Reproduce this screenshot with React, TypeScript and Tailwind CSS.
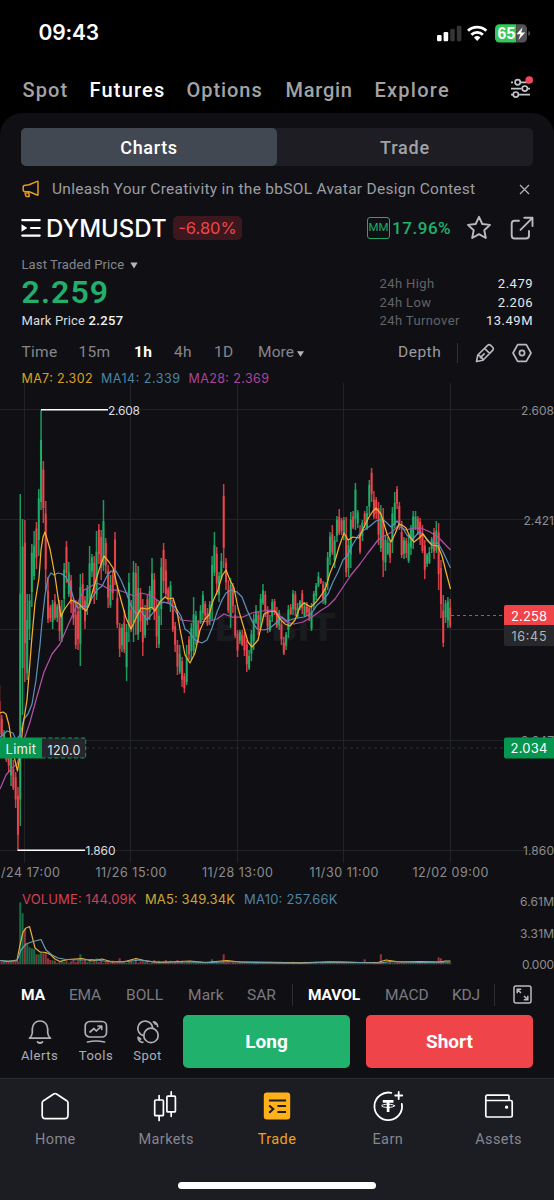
import React from "react";

type Candle = [number, number, "g" | "r"];

const STEP = 2.3115;
const LAST_X = 450.2;

// Oldest to newest: high y, low y, direction
const CANDLES: Candle[] = [
  [685, 738, "r"], [715, 742, "r"], [730, 750, "g"], [738, 762, "r"], [745, 772, "r"], [742, 786, "g"], [760, 790, "r"], [772, 808, "r"],
  [787, 850, "r"], [494, 826, "g"], [519, 715, "g"], [520, 682, "r"], [594, 680, "g"], [594, 640, "g"], [544, 607, "g"], [531, 580, "g"],
  [522, 569, "r"], [489, 556, "g"], [410, 510, "g"], [461, 523, "r"], [501, 591, "r"], [577, 623, "r"], [605, 622, "r"], [600, 629, "g"],
  [594, 620, "r"], [604, 622, "g"], [600, 641, "r"], [600, 642, "g"], [563, 610, "g"], [541, 583, "r"], [562, 597, "g"], [575, 613, "r"],
  [598, 625, "r"], [600, 649, "r"], [605, 650, "r"], [574, 666, "g"], [573, 610, "r"], [596, 629, "r"], [585, 615, "g"], [546, 604, "g"],
  [554, 577, "g"], [556, 604, "r"], [531, 600, "g"], [524, 564, "r"], [530, 580, "r"], [500, 571, "g"], [538, 574, "r"], [565, 608, "r"],
  [575, 608, "g"], [571, 600, "r"], [532, 585, "r"], [585, 628, "r"], [623, 657, "r"], [624, 652, "g"], [610, 653, "r"], [624, 681, "g"],
  [573, 642, "g"], [600, 632, "r"], [561, 642, "g"], [563, 635, "r"], [566, 640, "g"], [588, 632, "r"], [599, 656, "r"], [605, 638, "g"],
  [595, 625, "r"], [586, 620, "g"], [558, 610, "g"], [573, 620, "r"], [600, 648, "r"], [602, 648, "g"], [558, 625, "g"], [543, 593, "r"],
  [559, 597, "r"], [587, 602, "r"], [581, 612, "g"], [600, 632, "r"], [622, 652, "r"], [640, 675, "r"], [645, 674, "g"], [657, 687, "r"],
  [673, 693, "r"], [645, 685, "g"], [636, 660, "r"], [623, 660, "g"], [597, 655, "g"], [611, 645, "g"], [620, 643, "r"], [605, 624, "g"],
  [591, 620, "g"], [601, 620, "r"], [608, 626, "r"], [601, 625, "g"], [556, 620, "g"], [532, 576, "g"], [547, 595, "r"], [572, 602, "g"],
  [553, 580, "g"], [484, 568, "r"], [558, 590, "r"], [580, 613, "r"], [578, 628, "g"], [583, 613, "r"], [605, 638, "r"], [630, 657, "r"],
  [630, 644, "g"], [630, 646, "r"], [632, 656, "r"], [640, 672, "r"], [650, 670, "g"], [630, 661, "g"], [614, 650, "g"], [605, 624, "g"],
  [612, 635, "r"], [594, 628, "g"], [584, 605, "g"], [591, 617, "r"], [606, 633, "r"], [615, 632, "g"], [599, 622, "g"], [599, 615, "r"],
  [607, 628, "r"], [610, 630, "g"], [621, 645, "r"], [637, 655, "r"], [632, 650, "g"], [605, 638, "g"], [604, 615, "r"], [590, 615, "g"],
  [591, 616, "r"], [603, 618, "g"], [600, 610, "g"], [590, 614, "r"], [602, 617, "g"], [602, 616, "r"], [606, 621, "r"], [603, 631, "g"],
  [591, 610, "g"], [583, 600, "g"], [572, 587, "g"], [578, 584, "r"], [581, 604, "r"], [582, 605, "g"], [552, 590, "g"], [532, 565, "g"],
  [525, 555, "r"], [536, 568, "g"], [516, 542, "g"], [509, 535, "r"], [518, 535, "r"], [517, 540, "g"], [517, 577, "r"], [540, 577, "g"],
  [512, 568, "g"], [511, 529, "r"], [483, 530, "g"], [510, 528, "g"], [525, 554, "r"], [520, 541, "g"], [511, 528, "r"], [506, 530, "g"],
  [480, 515, "g"], [468, 502, "r"], [491, 519, "r"], [497, 519, "r"], [502, 545, "r"], [505, 552, "g"], [508, 577, "r"], [535, 571, "g"],
  [537, 555, "g"], [540, 563, "r"], [507, 553, "g"], [492, 528, "g"], [486, 509, "r"], [502, 530, "r"], [521, 558, "r"], [537, 559, "g"],
  [538, 558, "r"], [535, 563, "g"], [525, 555, "g"], [511, 549, "g"], [511, 530, "g"], [516, 535, "r"], [518, 545, "r"], [525, 553, "r"],
  [540, 579, "r"], [553, 567, "g"], [547, 564, "g"], [537, 553, "g"], [528, 559, "r"], [521, 553, "g"], [523, 590, "r"], [560, 618, "r"],
  [595, 647, "r"], [600, 623, "g"], [597, 628, "g"], [599, 628, "r"],
];

const MA7 =
  "0,713 3,712 6,714 9,725 13,752 17.5,771 20,755 23,725 27,700 31.7,640 35,603 39,578 41,550 43,537 45,532 50,549 55,576 58,597 61,617 64,610 71,600 78,603 86,611 89,605 93,590 99,570 104,556 109,562 113,568 117,585 121,600 126,618 131,629 136,618 141,608 147,609 152,607 155,611 160,602 165,597 168,599 173,598 177,611 180,629 185,655 190,663 195,653 200,630 205,619 209,615 213,601 218,590 222,576 226,570 230,580 234,588 238,608 243,625 248,642 252,647 258,640 264,614 268,612 275,611 280,619 285,624 290,626 295,620 300,607 304,603 311,607 316,602 322,594 326,587 330,573 335,561 339,547 344,533 348,540 353,537 359,538 363,529 369,517 373,511 376,508 381,514 384,524 387,534 391,542 395,534 399,524 402,525 406,528 410,537 414,542 419,538 423,534 427,540 432,545 438,546 442,556 446,572 450.5,589";
const MA14 =
  "0,737 4,734 7,731 13,733 16,740 20,735 24,719 28,714 32,704 36,680 40,645 42,622 45,595 48,578 51,573 54,575 58,573 62,574 66,577 70,586 74,600 78,608 84,606 88,607 92,598 97,590 102,586 107,576 111,571 116,571 121,580 126,592 131,606 136,614 141,611 147,620 152,614 158,605 164,602 170,604 176,608 181,616 185,629 189,632 195,640 202,643 207,640 212,628 217,612 222,600 226,593 231,590 237,592 242,597 247,610 252,621 257,629 264,630 270,628 276,623 282,617 287,621 293,619 298,618 304,617 311,614 317,605 322,601 328,594 333,582 338,572 343,560 347,556 353,544 358,536 364,530 370,526 376,521 382,519 386,522 391,527 397,521 402,527 407,535 412,540 419,532 423,534 430,543 438,543 443,552 450.5,568";
const MA28 =
  "0,789 6,775 12,768 17,764 24,740 30,722 36,700 44,672 52,654 60,644 66,630 73,614 78,602 84,590 90,587 96,583 102,585 110,590 118,590 127,593 134,596 141,593 150,595 160,602 170,603 176,612 181,620 190,621 200,622 210,621 217,619 224,614 232,617 243,617 252,613 262,611 272,610 278,614 286,622 294,624 303,622 312,617 320,611 328,606 335,599 343,587 351,575 360,564 368,553 378,540 384,536 392,532 398,526 406,530 413,528 421,528 430,532 438,537 450.5,550";

const BIG_VOLUME: Record<number, number> = {
  9: 62, 10: 51, 11: 36, 12: 21, 13: 17, 14: 16, 15: 15, 16: 10, 17: 10, 18: 13, 19: 11, 20: 12, 21: 6, 23: 4,
  35: 10, 42: 6, 52: 6, 59: 6, 92: 5, 97: 10, 158: 5, 174: 3, 165: 10, 190: 7, 191: 6,
};

const Label = ({ x, y, w, size = 12.5, fill = "#8b8c91", children }: {
  x: number; y: number; w: number; size?: number; fill?: string; children: string;
}) => (
  <text x={x} y={y} textLength={w} lengthAdjust="spacing" fontSize={size} fill={fill} fontFamily="Inter, sans-serif">
    {children}
  </text>
);

function Chart() {
  const n = CANDLES.length;
  return (
    <svg width="554" height="608" viewBox="0 372 554 608" className="block shrink-0">
      <g stroke="#222327" strokeWidth="1">
        {[24.5, 130.5, 237.5, 343.5, 450.5].map((x) => <line key={x} x1={x} x2={x} y1="383" y2="863" />)}
        {[409.5, 519.5, 629.5, 740.5, 850.5].map((y) => <line key={y} x1="0" x2="554" y1={y} y2={y} />)}
      </g>
      <text x="215" y="641" textLength="121" fontSize="38" fontWeight="800" fill="#1a1b1e" fontFamily="Inter, sans-serif">BYBIT</text>
      <line x1="86" x2="504" y1="748" y2="748" stroke="#26302d" strokeDasharray="3 3" />
      {CANDLES.map(([h, l, c], i) => {
        const x = LAST_X - (n - 1 - i) * STEP;
        const color = c === "g" ? "#20b06b" : "#ee454d";
        const size = l - h;
        const top = h + size * (i % 3 === 0 ? 0.3 : 0.14);
        return (
          <g key={i} fill={color}>
            <rect x={x - 0.75} y={h} width="1.5" height={size} opacity="0.85" />
            <rect x={x - 1} y={top} width="2" height={size * 0.62} opacity="0.9" />
          </g>
        );
      })}
      <g fill="none" strokeWidth="1.25" strokeLinejoin="round">
        <polyline points={MA28} stroke="#b24fa6" />
        <polyline points={MA14} stroke="#5b8fb9" />
        <polyline points={MA7} stroke="#f2b02c" />
      </g>
      <path d="M41 409.8H108M17.5 850.3H85" stroke="#fff" strokeWidth="1.4" />
      <Label x={108} y={414.5} w={32} size={12} fill="#dcdde0">2.608</Label>
      <Label x={85.5} y={855} w={30} size={12} fill="#dcdde0">1.860</Label>

      <Label x={21.5} y={383} w={71} fill="#d9a020">MA7: 2.302</Label>
      <Label x={101} y={383} w={79} fill="#4d83a3">MA14: 2.339</Label>
      <Label x={188.5} y={383} w={80.5} fill="#a8459b">MA28: 2.369</Label>

      <Label x={521} y={414.5} w={33} size={12}>2.608</Label>
      <Label x={523.5} y={524.5} w={30.5} size={12}>2.421</Label>
      <Label x={521} y={745} w={33} size={12}>2.047</Label>
      <Label x={523} y={855} w={31} size={12}>1.860</Label>
      <line x1="451" x2="504" y1="615.5" y2="615.5" stroke="#6d6e73" strokeDasharray="3 3" />
      <path d="M506 605H554V625H504V607a2 2 0 0 1 2-2Z" fill="#f0444b" />
      <path d="M504 625H554V646H506a2 2 0 0 1-2-2Z" fill="#26282c" />
      <Label x={511} y={620.5} w={36} size={13} fill="#ffffff">2.258</Label>
      <Label x={511.5} y={640.5} w={35} size={12.5} fill="#b3b4b8">16:45</Label>
      <rect x="504" y="737.5" width="52" height="21" rx="2" fill="#05964f" />
      <Label x={510.5} y={753} w={37} size={13} fill="#ffffff">2.034</Label>

      <rect x="42" y="738" width="44" height="20" fill="#26272c" />
      <path d="M42 738H85.7V758H42" fill="none" stroke="#0c9a58" strokeDasharray="4 2.5" />
      <rect x="0" y="737.5" width="42" height="21" fill="#05964f" />
      <Label x={5.5} y={753.5} w={30.5} size={13} fill="#f2f3f4">Limit</Label>
      <Label x={47.5} y={754.5} w={33} size={12.5} fill="#e4e5e7">120.0</Label>

      <Label x={1} y={877} w={59}>/24 17:00</Label>
      <Label x={95.5} y={877} w={71}>11/26 15:00</Label>
      <Label x={202} y={877} w={71}>11/28 13:00</Label>
      <Label x={309.5} y={877} w={69}>11/30 11:00</Label>
      <Label x={412.5} y={877} w={76}>12/02 09:00</Label>

      {CANDLES.map(([, , c], i) => {
        const h = BIG_VOLUME[i] ?? (i < 9 ? 3 : 1.5 + ((i * 7) % 5) * (i < 80 ? 0.7 : 0.25));
        const red = c === "r" || i === 165;
        return <rect key={i} x={LAST_X - (n - 1 - i) * STEP - 1} y={964.3 - h} width="2" height={h} fill={red ? "#96323a" : "#176b45"} />;
      })}
      <g fill="none" strokeWidth="1.2" strokeLinejoin="round">
        <polyline stroke="#e0b040" points="0,960.5 8,961.5 17,960 20,945 23,932 26,928 29.5,926.5 32,936 35,948 40,952 46,952.5 51,955 55,959 60,961.5 68,959.5 82,958.5 92,961 102,959 112,962 125,961.5 136,958.5 146,961 160,962.5 190,961 205,962.5 227,960.5 240,962 300,962.8 330,961.8 360,962.5 378,962.5 386,960 400,962 420,961.5 440,962 445,961 450.5,961" />
        <polyline stroke="#6d9db0" points="0,960.5 8,961 17,961 21,950 26,944 33,941.5 41,939.5 46,950 52,955 58,958 66,959.5 82,960 92,959.5 104,961 122,962 140,960 156,962 190,962 210,962.5 232,961.5 250,962.5 300,963 340,962 380,963 390,961.5 420,962.3 450.5,962" />
      </g>
      <Label x={22} y={904} w={114.5} size={13} fill="#d43f55">VOLUME: 144.09K</Label>
      <Label x={145} y={904} w={90} size={13} fill="#cda736">MA5: 349.34K</Label>
      <Label x={244} y={904} w={93.5} size={13} fill="#4d83a3">MA10: 257.66K</Label>
      <Label x={520} y={906} w={34} size={12}>6.61M</Label>
      <Label x={520} y={937.5} w={34} size={12}>3.31M</Label>
      <Label x={522} y={969} w={32} size={12}>0.000</Label>
    </svg>
  );
}

const StatusBar = () => (
  <div className="flex h-[66px] shrink-0 items-center justify-between pl-[38.5px] pr-[22px] text-white">
    <span className="font-[Inter] text-[21px] font-semibold tracking-[-0.2px]">09:43</span>
    <svg width="96" height="22" viewBox="0 0 96 22">
      <rect x="1" y="13" width="4.6" height="6.3" rx="1.2" fill="#fff" />
      <rect x="7.6" y="10" width="4.6" height="9.3" rx="1.2" fill="#fff" />
      <rect x="14.2" y="7" width="4.6" height="12.3" rx="1.2" fill="#353538" />
      <rect x="20.8" y="3.8" width="4.6" height="15.5" rx="1.2" fill="#353538" />
      <g fill="none" stroke="#fff" strokeWidth="2.9">
        <path d="M32 8.8a13.2 13.2 0 0 1 18.3 0" />
        <path d="M35.4 12.7a8.3 8.3 0 0 1 11.5 0" />
      </g>
      <path d="M38 15.5a4.6 4.6 0 0 1 6.3 0L41.2 19Z" fill="#fff" />
      <clipPath id="battery"><rect x="59" y="2.2" width="32" height="18.3" rx="4.5" /></clipPath>
      <g clipPath="url(#battery)">
        <rect x="59" y="2" width="21.2" height="19" fill="#34c759" />
        <rect x="80.2" y="2" width="11" height="19" fill="#525255" />
      </g>
      <path d="M92.3 9v5q2-.6 2-2.5t-2-2.5" fill="#525255" />
      <text x="61.6" y="16.9" fontSize="15.8" fontWeight="700" fill="#fff" fontFamily="'Liberation Sans', sans-serif">65</text>
      <path d="M86.6 5.2 80.4 12.2H84.4L82.4 18 89.2 10.4H85.2Z" fill="#fff" />
    </svg>
  </div>
);

const TopTabs = () => (
  <div className="flex h-[47px] shrink-0 items-center pl-[22.5px] pt-[1px] text-[20px] font-medium text-[#a3a3a3]">
    <span className="w-[67px] tracking-[1.1px]">Spot</span>
    <span className="w-[97px] tracking-[1.2px] text-white">Futures</span>
    <span className="w-[99px] tracking-[0.95px]">Options</span>
    <span className="w-[89px] tracking-[0.75px]">Margin</span>
    <span className="w-[135px] tracking-[1.25px]">Explore</span>
    <svg className="mb-[6px]" width="24" height="26" viewBox="0 0 24 26" fill="none" stroke="#c3c4c8" strokeWidth="1.7">
      <path d="M1 8.3H3M10.7 8.3H19M1 14.6H11.5M18 14.6H20M1 20.6H3M9 20.6H20" />
      <circle cx="7.7" cy="8.3" r="2.6" /><circle cx="14.8" cy="14.6" r="2.6" /><circle cx="5.8" cy="20.6" r="2.6" />
      <circle cx="19.2" cy="6" r="3.8" fill="#f5455a" stroke="none" />
    </svg>
  </div>
);

const Segment = () => (
  <div className="mx-[21px] mt-[15px] flex h-[38px] shrink-0 rounded-[5px] bg-[#1d1d23] text-[18px] font-medium">
    <div className="flex flex-1 items-center justify-center rounded-[5px] bg-[#414852] tracking-[0.65px] text-white">Charts</div>
    <div className="flex flex-1 items-center justify-center tracking-[0.8px] text-[#a1a2a7]">Trade</div>
  </div>
);

const Announcement = () => (
  <div className="flex h-[46px] shrink-0 items-center pl-[22px] pr-[24px]">
    <svg width="18" height="18" viewBox="0 0 18 18" fill="none" stroke="#e79b1e" strokeWidth="1.5" strokeLinejoin="round" strokeLinecap="round">
      <path d="M1.2 6.8Q1.2 5.8 2.2 5.6L7 4.8 15.2 1.4Q16 1.2 16 2V14.5Q16 15.4 15.2 15L7.2 11.8 2.2 11.4Q1.2 11.2 1.2 10.3ZM2.8 11.6 3.7 15.6Q3.9 16.5 4.8 16.5H6.5Q7.4 16.4 7.2 15.5L6.4 11.8M4.5 11.6 5 13.4" />
    </svg>
    <span className="ml-[12px] flex-1 whitespace-nowrap pt-[2px] text-[15.5px] tracking-[0.275px] text-[#9c9da3]">Unleash Your Creativity in the bbSOL Avatar Design Contest</span>
    <svg width="11" height="11" viewBox="0 0 11 11" stroke="#b4b5b9" strokeWidth="1.2"><path d="M1 1 10 10M10 1 1 10" /></svg>
  </div>
);

const TitleRow = () => (
  <div className="flex h-[32px] shrink-0 items-center pl-[21px] pr-[20.5px]">
    <svg width="20" height="20" viewBox="0 0 20 20" fill="none" stroke="#fff" strokeWidth="2.2" strokeLinecap="round">
      <path d="M1.3 2.2H18.7M10 10H18.7M1.3 17.6H18.7" /><path d="M.5 6.2 6.3 10 .5 13.8Z" fill="#fff" stroke="none" />
    </svg>
    <span className="ml-[5px] w-[122px] whitespace-nowrap pt-[1px] font-[Inter] text-[24px] font-medium text-white">DYMUSDT</span>
    <span className="ml-[5px] flex h-[24px] w-[69px] items-center justify-center rounded-[5px] bg-[#3c181e] font-[Inter] text-[16.5px] text-[#ef454a]">-6.80%</span>
    <span className="ml-auto flex h-[22px] w-[23px] items-center justify-center rounded-[3px] border-[1.5px] border-[#1fa968] text-[11.5px] text-[#1fa968]">MM</span>
    <span className="ml-[2px] w-[59px] whitespace-nowrap pt-[1px] text-[17px] font-medium tracking-[0.55px] text-[#22b06c]">17.96%</span>
    <svg className="ml-[15px]" width="26" height="26" viewBox="0 0 26 26" fill="none" stroke="#b9bac0" strokeWidth="1.9" strokeLinejoin="round">
      <path d="M13 1.8 16.3 9 24 9.9 18.3 15.2 19.8 23 13 19.1 6.2 23 7.7 15.2 2 9.9 9.7 9Z" />
    </svg>
    <svg className="ml-[17.5px]" width="24" height="24" viewBox="0 0 24 24" fill="none" stroke="#b9bac0" strokeWidth="1.9" strokeLinecap="round" strokeLinejoin="round">
      <path d="M9 4.8H4.5Q1.7 4.8 1.7 7.6V19.5Q1.7 22.5 4.5 22.5H16Q19 22.5 19 19.5V15M14.3 1.8H22.5V10M22.2 2.2 10.5 13.8" />
    </svg>
  </div>
);

const Stat = ({ label, value }: { label: string; value: string }) => (
  <div className="flex h-[18.7px] items-center justify-between">
    <span className="tracking-[0.4px] text-[#626369]">{label}</span>
    <span className="tracking-[0.5px] text-[#e6e6e9]">{value}</span>
  </div>
);

const PriceBlock = () => (
  <div className="flex h-[88px] shrink-0 justify-between pl-[21.5px] pr-[21px]">
    <div className="flex flex-col">
      <div className="mt-[12px] flex h-[18px] items-center text-[13px] tracking-[0.12px] text-[#85868c]">
        Last Traded Price
        <svg className="ml-[6px]" width="8" height="7" viewBox="0 0 8 7" fill="#b4b5b9"><path d="M.3.5H7.7L4 6.5Z" /></svg>
      </div>
      <div className="flex h-[35px] items-center text-[32px] font-semibold tracking-[1.1px] text-[#24ae6b]">2.259</div>
      <div className="mt-[2px] flex h-[20px] items-center whitespace-pre text-[13px] tracking-[0.15px] text-[#dadade]">
        Mark Price <span className="font-medium tracking-[0.4px] text-[#f4f4f6]">2.257</span>
      </div>
    </div>
    <div className="mt-[30.5px] w-[153.5px] text-[13px]">
      <Stat label="24h High" value="2.479" />
      <Stat label="24h Low" value="2.206" />
      <Stat label="24h Turnover" value="13.49M" />
    </div>
  </div>
);

const TimeRow = () => (
  <div className="flex h-[40px] shrink-0 items-center pl-[21.5px] pt-[2px] text-[15.5px] tracking-[0.3px] text-[#85868c]">
    <span className="w-[57px]">Time</span>
    <span className="w-[55.5px]">15m</span>
    <span className="w-[40px] font-bold text-white">1h</span>
    <span className="w-[40px]">4h</span>
    <span className="w-[44px]">1D</span>
    <span className="w-[37px] tracking-[0.1px]">More</span>
    <svg className="ml-[2px] mt-[2px]" width="7" height="6" viewBox="0 0 7 6" fill="#b4b5b9"><path d="M0 .3H7L3.5 5.8Z" /></svg>
    <span className="ml-auto w-[59px] tracking-[0.5px] text-[#9a9ba1]">Depth</span>
    <span className="h-[20px] w-px bg-[#2f3036]" />
    <svg className="ml-[17px]" width="20" height="20" viewBox="0 0 20 20" fill="none" stroke="#b9bac0" strokeWidth="1.6" strokeLinejoin="round">
      <path d="M1.5 18.5 2.8 12 12.6 2.4Q14.1 1 15.7 2.4L17.6 4.3Q19 5.8 17.6 7.4L8 17.2ZM9.6 5.4 14.6 10.4M2.8 12.2Q5.6 12.4 5.4 14.6 7.6 14.4 8 17M5.4 14.6 9.6 10.4" />
    </svg>
    <svg className="ml-[17px] mr-[22px]" width="20" height="20" viewBox="0 0 20 20" fill="none" stroke="#b9bac0" strokeWidth="1.7" strokeLinejoin="round">
      <path d="M5.7 1.6H14.3L19 10 14.3 18.4H5.7L1 10Z" /><circle cx="10" cy="10" r="2.6" />
    </svg>
  </div>
);

const IndicatorRow = () => (
  <div className="flex h-[28px] shrink-0 items-center pl-[21px] pt-[1px] text-[15.5px] leading-[26px] text-[#797a80]">
    <span className="w-[48px] pt-[1px] font-bold text-white">MA</span>
    <span className="w-[57px] pt-[1px] tracking-[-0.3px]">EMA</span>
    <span className="w-[62px] pt-[1px]">BOLL</span>
    <span className="w-[59px] pt-[1px] tracking-[0.2px]">Mark</span>
    <span className="w-[45px] pt-[1px]">SAR</span>
    <span className="h-[22px] w-px bg-[#2c2d32]" />
    <span className="ml-[15px] w-[77px] pt-[1px] font-bold tracking-[-0.1px] text-white">MAVOL</span>
    <span className="w-[67px] pt-[1px] tracking-[-0.1px]">MACD</span>
    <span className="w-[42px] pt-[1px] tracking-[-0.2px]">KDJ</span>
    <span className="h-[22px] w-px bg-[#2c2d32]" />
    <svg className="ml-[17.5px]" width="19" height="19" viewBox="0 0 19 19" fill="none" stroke="#b9bac0" strokeWidth="1.5">
      <rect x="1" y="1" width="17" height="17" rx="2" /><path d="M4.2 8.2V4.2H8.2M4.6 4.6 8 8M14.8 10.8V14.8H10.8M14.4 14.4 11 11" />
    </svg>
  </div>
);

const ic = { fill: "none", stroke: "#aeb0b6", strokeWidth: 1.7, strokeLinecap: "round", strokeLinejoin: "round" } as const;

const Actions = () => (
  <div className="flex h-[70px] shrink-0 pl-[21px] pr-[21px] text-[13px] tracking-[0.5px] text-[#adaeb4]">
    <div className="flex w-[37px] flex-col items-center pt-[11px]">
      <svg width="24" height="26" viewBox="0 0 24 26" {...ic}>
        <path d="M1.5 19.2H22.5Q20.2 17.5 19.7 14V9.8Q18.8 2 12 2T4.3 9.8V14Q3.8 17.5 1.5 19.2ZM9.5 23Q12 25 14.5 23" />
      </svg>
      <span className="mt-[1px]">Alerts</span>
    </div>
    <div className="ml-[20px] flex w-[36px] flex-col items-center pt-[11px]">
      <svg width="24" height="26" viewBox="0 0 24 26" {...ic}>
        <rect x="1.2" y="2.5" width="21.3" height="15.5" rx="4.5" /><path d="M6 13 10 9.5 12.3 12 17.5 7.2M14 7H17.7V10.3M3.5 23Q12 21 20.5 23" />
      </svg>
      <span className="mt-[1px]">Tools</span>
    </div>
    <div className="ml-[17px] flex w-[33px] flex-col items-center pt-[11px]">
      <svg width="24" height="26" viewBox="0 0 24 26" {...ic}>
        <path d="M7.4 16.6A7.4 7.4 0 1 1 16.6 9" /><circle cx="15" cy="16.4" r="7.2" />
        <path d="M17.5 2.8Q21.2 3.4 21.7 7.5M17.5 2.8 19.3 5M2 18.3Q2.5 22.8 6.8 23.4M2 18.3 4.6 20" />
      </svg>
      <span className="mt-[1px]">Spot</span>
    </div>
    <button className="ml-[19px] mt-[7px] h-[53px] w-[167px] rounded-[5px] bg-[#20b26c] pt-[1px] text-[19px] font-bold tracking-[0px] text-white">Long</button>
    <button className="ml-[16px] mt-[7px] h-[53px] w-[167px] rounded-[5px] bg-[#ef454a] pt-[1px] text-[19px] font-bold tracking-[0px] text-white">Short</button>
  </div>
);

const NavItem = ({ label, active, children }: { label: string; active?: boolean; children: React.ReactNode }) => (
  <div className="flex w-[110.8px] flex-col items-center">
    <svg width="32" height="32" viewBox="0 0 32 32" fill="none" stroke="#fff" strokeWidth="1.7" strokeLinejoin="round" strokeLinecap="round">{children}</svg>
    <span className={active ? "mt-[7px] text-[#eda31d]" : "mt-[7px] text-[#85868e]"}>{label}</span>
  </div>
);

const BottomNav = () => (
  <div className="flex h-[122px] shrink-0 flex-col items-center border-t border-[#2b2b32] bg-[#1c1c23]">
    <div className="flex h-[103px] w-full pt-[11px] text-[14.5px] leading-[22px] tracking-[0.4px]">
      <NavItem label="Home"><path d="M16.1 3.5Q15.5 3.5 14.7 4L4.5 10.7Q3.2 11.7 3.2 13V25.2Q3.2 28.6 6.5 28.6H25.5Q29 28.6 29 25.2V13Q29 11.7 27.7 10.7L17.5 4Q16.8 3.5 16.1 3.5Z" /></NavItem>
      <NavItem label="Markets">
        <rect x="4.7" y="10" width="8.7" height="15.7" rx="1" /><rect x="16.9" y="6.2" width="8.5" height="15.7" rx="1" />
        <path d="M9.1 5.5V9.8M9.1 25.8V30.5M21.2 1.8V6M21.2 22V26.3" />
      </NavItem>
      <NavItem label="Trade" active>
        <rect x="2.8" y="2.5" width="26.4" height="27" rx="3" fill="#ffb11a" stroke="none" />
        <path d="M9 10.5H24M17.5 16H24M17.5 22H24M9 16.2 12.2 19 9 22" stroke="#1c1c23" strokeWidth="2.1" strokeLinejoin="miter" strokeLinecap="square" />
      </NavItem>
      <NavItem label="Earn">
        <path d="M19.3 2.9A13.8 13.8 0 1 0 29.8 13.8M26.7 2V9M23.2 5.5H30.2" strokeWidth="1.8" />
        <path d="M10.8 11.3H21.5M16.1 11.3V22" strokeWidth="2.7" strokeLinecap="butt" /><ellipse cx="16.1" cy="15.8" rx="6.5" ry="1.6" strokeWidth="1" />
      </NavItem>
      <NavItem label="Assets">
        <path d="M26 10.5V6.2Q26 5.2 25 5.2H4.2Q2.8 5.2 2.8 6.6V25.8Q2.8 27 4 27H27.8Q29.2 27 29.2 25.8V12Q29.2 10.5 27.8 10.5H3.5" /><circle cx="23.6" cy="17.2" r=".8" fill="#fff" />
      </NavItem>
    </div>
    <div className="h-[7px] w-[198px] rounded-full bg-white" />
  </div>
);

export default function App() {
  return (
    <div className="flex h-[1200px] w-[554px] flex-col overflow-hidden bg-black font-[Roboto,sans-serif]">
      <StatusBar />
      <TopTabs />
      <main className="flex shrink-0 flex-col overflow-hidden rounded-t-[22px] bg-[#101014]">
        <Segment />
        <Announcement />
        <TitleRow />
        <PriceBlock />
        <TimeRow />
        <Chart />
        <IndicatorRow />
        <Actions />
        <BottomNav />
      </main>
    </div>
  );
}
